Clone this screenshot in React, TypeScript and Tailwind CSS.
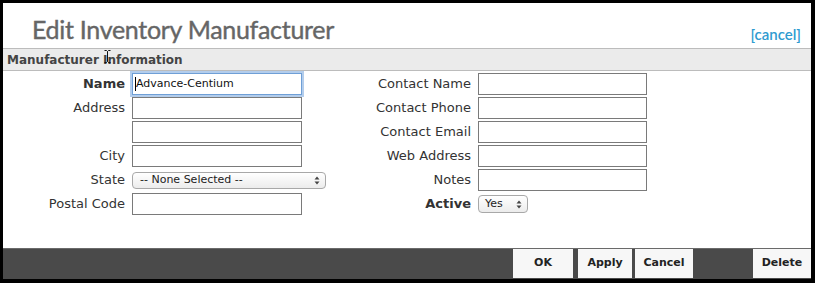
const leftRows = [
  { label: "Name", bold: true, kind: "focus", value: "Advance-Centium" },
  { label: "Address", kind: "input" },
  { label: "", kind: "input" },
  { label: "City", kind: "input" },
  { label: "State", kind: "state" },
  { label: "Postal Code", kind: "input" },
];

const rightRows = [
  { label: "Contact Name", kind: "input" },
  { label: "Contact Phone", kind: "input" },
  { label: "Contact Email", kind: "input" },
  { label: "Web Address", kind: "input" },
  { label: "Notes", kind: "input" },
  { label: "Active", bold: true, kind: "active" },
];

function Arrows() {
  return (
    <svg width="6" height="9" viewBox="0 0 6 9" className="shrink-0">
      <path d="M3 0.5 L5.5 3.5 H0.5 Z" fill="#444" />
      <path d="M3 8.5 L5.5 5.5 H0.5 Z" fill="#444" />
    </svg>
  );
}

function Field({ kind, value, wide }: { kind: string; value?: string; wide: string }) {
  if (kind === "focus") {
    return (
      <div className={`${wide} flex h-[22px] shrink-0 items-center border border-[#6f9fd6] bg-white pl-[2px] text-[11px] text-[#111] shadow-[0_0_0_2px_#b3cdec]`}>
        <span className="h-[14px] w-px bg-black" />
        {value}
      </div>
    );
  }
  if (kind === "state") {
    return (
      <div className="flex h-[17px] w-[194px] shrink-0 items-center justify-between rounded-[4px] border border-[#a8a8a8] bg-gradient-to-b from-white to-[#ececec] pl-[7px] pr-[5px] text-[11px] text-[#222]">
        -- None Selected --
        <Arrows />
      </div>
    );
  }
  if (kind === "active") {
    return (
      <div className="flex h-[18px] w-[50px] shrink-0 items-center justify-between rounded-[4px] border border-[#a8a8a8] bg-gradient-to-b from-white to-[#ececec] pl-[6px] pr-[5px] text-[11px] text-[#222]">
        Yes
        <Arrows />
      </div>
    );
  }
  return <div className={`${wide} h-[22px] shrink-0 border border-[#7a7a7a] bg-white`} />;
}

export default function App() {
  return (
    <div className="flex h-[283px] w-[815px] flex-col border-b-[4px] border-l-[3px] border-r-[4px] border-t-[3px] border-black bg-white font-['DejaVu_Sans',sans-serif] text-[#333]">

      <div className="flex h-[45px] shrink-0 items-end justify-between pb-[2px] pl-[29px] pr-[10px]">
        <h1 className="font-['Lato',sans-serif] text-[25px] leading-[34px] tracking-[-0.3px] text-[#666] [-webkit-text-stroke:0.4px_#666]">
          Edit Inventory Manufacturer
        </h1>
        <a className="mb-[1px] font-['Lato',sans-serif] text-[15px] font-semibold text-[#2f9bd0]">
          [cancel]
        </a>
      </div>

      <div className="relative flex h-[23px] shrink-0 items-center border-y border-[#bcbcbc] bg-[#ebebeb] pl-[4px] text-[12px] font-bold text-[#444]">
        Manufacturer Information
        <svg width="7" height="13" viewBox="0 0 7 13" className="absolute left-[101px] top-[1px]">
          <path d="M0.5 0.5 H2.5 L3.5 1.5 L4.5 0.5 H6.5 M3.5 1.5 V11.5 M0.5 12.5 H2.5 L3.5 11.5 L4.5 12.5 H6.5" stroke="#111" fill="none" />
        </svg>
      </div>

      <div className="flex flex-1 pt-[1px]">

        <div className="flex w-[299px] flex-col">
          {leftRows.map((row, i) => (
            <div key={i} className="flex h-[24px] items-center gap-[7px]">
              <span className={`w-[122px] shrink-0 text-right text-[13px] ${row.bold ? "font-bold" : ""}`}>
                {row.label}
              </span>
              <Field kind={row.kind} value={row.value} wide="w-[170px]" />
            </div>
          ))}
        </div>

        <div className="flex flex-col">
          {rightRows.map((row, i) => (
            <div key={i} className="flex h-[24px] items-center gap-[7px]">
              <span className={`w-[169px] shrink-0 text-right text-[13px] ${row.bold ? "font-bold" : ""}`}>
                {row.label}
              </span>
              <Field kind={row.kind} wide="w-[169px]" />
            </div>
          ))}
        </div>

      </div>

      <div className="flex h-[31px] shrink-0 items-start justify-end border-t border-[#6a6a6a] bg-[#4a4a4a]">
        <button className="h-[29px] w-[60px] bg-[#f7f7f7] text-[11px] font-bold text-[#222]">OK</button>
        <button className="ml-[5px] h-[29px] w-[54px] bg-[#f7f7f7] text-[11px] font-bold text-[#222]">Apply</button>
        <button className="ml-[3px] h-[29px] w-[58px] bg-[#f7f7f7] text-[11px] font-bold text-[#222]">Cancel</button>
        <button className="ml-[60px] h-[29px] w-[58px] bg-[#f7f7f7] text-[11px] font-bold text-[#222]">Delete</button>
      </div>

    </div>
  );
}
